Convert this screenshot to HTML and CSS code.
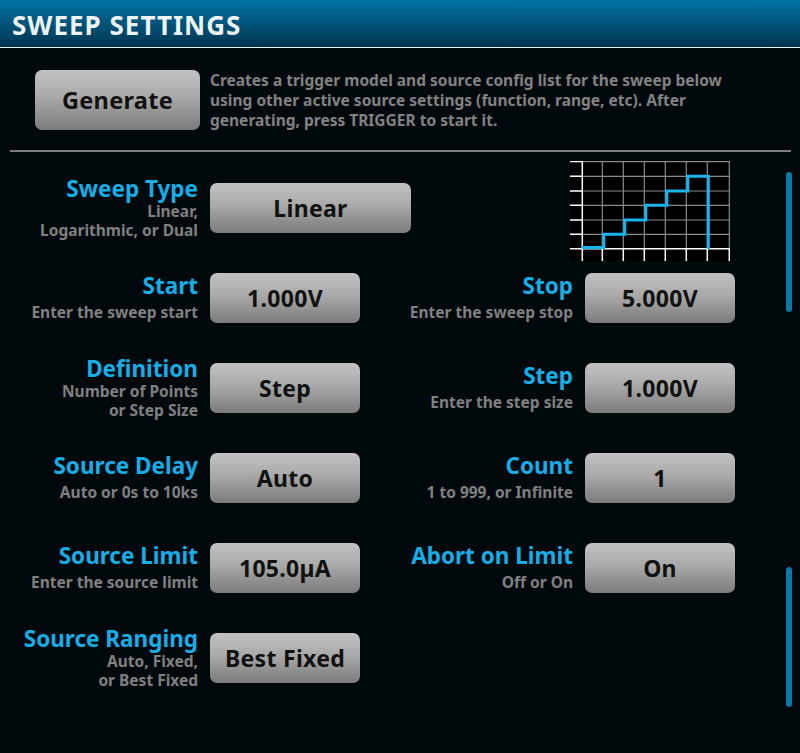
FILE: index.html
```html
<!DOCTYPE html>
<html lang="en">
<head>
    <meta charset="UTF-8">
    <meta name="viewport" content="width=device-width, initial-scale=1.0">
    <title>Sweep Settings</title>
    <link rel="stylesheet" href="styles.css">
</head>
<body>
    <div class="screen">
        <h1 class="title-bar">SWEEP SETTINGS</h1>

        <div class="intro">
            <button class="btn btn-generate">Generate</button>
            <p class="intro-text">Creates a trigger model and source config list for the sweep below<br>
                using other active source settings (function, range, etc). After<br>
                generating, press TRIGGER to start it.</p>
        </div>

        <div class="divider"></div>

        <div class="settings">
            <div class="row">
                <div class="field">
                    <div class="label">
                        <div class="name">Sweep Type</div>
                        <div class="hint tight">Linear,<br>Logarithmic, or Dual</div>
                    </div>
                    <button class="btn btn-wide">Linear</button>
                </div>
                <svg class="preview" width="160" height="100" viewBox="0 0 160 100">
                    <rect width="160" height="100" fill="#000"/>
                    <!-- grid -->
                    <g stroke="#8a8a8a" stroke-width="1.2">
                        <path d="M12 0.6H160M12 15.3H160M12 30H160M12 44.3H160M12 59H160M12 73.3H160"/>
                        <path d="M32.3 0V88M53.3 0V88M74.3 0V88M95.3 0V88M116.3 0V88M137.3 0V88M159.3 0V88"/>
                    </g>
                    <!-- axes and ticks -->
                    <g stroke="#fff" stroke-width="1.5">
                        <path d="M12.3 0V100M0 87.7H160"/>
                        <path d="M0 0.6H12M0 15.3H12M0 30H12M0 44.3H12M0 59H12M0 73.3H12"/>
                        <path d="M32.3 88V100M53.3 88V100M74.3 88V100M95.3 88V100M116.3 88V100M137.3 88V100M159.3 88V100"/>
                    </g>
                    <path d="M12 86.5H33.8V73.3H54.8V59H75.8V44.3H96.8V30H117.8V15.3H138.3V88" fill="none" stroke="#17b4ee" stroke-width="3"/>
                </svg>
            </div>

            <div class="row">
                <div class="field">
                    <div class="label">
                        <div class="name">Start</div>
                        <div class="hint">Enter the sweep start</div>
                    </div>
                    <button class="btn">1.000V</button>
                </div>
                <div class="field field-right">
                    <div class="label">
                        <div class="name">Stop</div>
                        <div class="hint">Enter the sweep stop</div>
                    </div>
                    <button class="btn">5.000V</button>
                </div>
            </div>

            <div class="row">
                <div class="field">
                    <div class="label">
                        <div class="name">Definition</div>
                        <div class="hint tight">Number of Points<br>or Step Size</div>
                    </div>
                    <button class="btn">Step</button>
                </div>
                <div class="field field-right">
                    <div class="label">
                        <div class="name">Step</div>
                        <div class="hint">Enter the step size</div>
                    </div>
                    <button class="btn">1.000V</button>
                </div>
            </div>

            <div class="row">
                <div class="field">
                    <div class="label">
                        <div class="name">Source Delay</div>
                        <div class="hint">Auto or 0s to 10ks</div>
                    </div>
                    <button class="btn">Auto</button>
                </div>
                <div class="field field-right">
                    <div class="label">
                        <div class="name">Count</div>
                        <div class="hint">1 to 999, or Infinite</div>
                    </div>
                    <button class="btn">1</button>
                </div>
            </div>

            <div class="row">
                <div class="field">
                    <div class="label">
                        <div class="name">Source Limit</div>
                        <div class="hint">Enter the source limit</div>
                    </div>
                    <button class="btn">105.0µA</button>
                </div>
                <div class="field field-right">
                    <div class="label">
                        <div class="name">Abort on Limit</div>
                        <div class="hint">Off or On</div>
                    </div>
                    <button class="btn">On</button>
                </div>
            </div>

            <div class="row">
                <div class="field">
                    <div class="label">
                        <div class="name">Source Ranging</div>
                        <div class="hint tight">Auto, Fixed,<br>or Best Fixed</div>
                    </div>
                    <button class="btn">Best Fixed</button>
                </div>
            </div>
        </div>

        <div class="thumb thumb-top"></div>
        <div class="thumb thumb-bottom"></div>
    </div>
</body>
</html>
```

FILE: styles.css
```css
* {
    margin: 0;
    padding: 0;
    box-sizing: border-box;
    font-family: 'Noto Sans', 'Open Sans', sans-serif;
}

body {
    background-color: #02090d;
    width: 800px;
    height: 753px;
    overflow: hidden;
}

.screen {
    position: relative;
    height: 753px;
}

.title-bar {
    height: 48px;
    padding: 4px 0 0 12px;
    line-height: 43px;
    font-size: 26px;
    font-weight: 700;
    letter-spacing: 1px;
    color: #eef3f6;
    background: linear-gradient(#0073a4, #01344f);
    border-bottom: 1px solid #eef3f6;
}

.intro {
    display: flex;
    gap: 10px;
    padding: 22px 0 20px 35px;
}

.intro-text {
    font-size: 15.5px;
    font-weight: 700;
    line-height: 20px;
    color: #828282;
    white-space: nowrap;
}

.divider {
    height: 2px;
    margin: 0 9px 0 10px;
    background-color: #7e7e7e;
}

.btn {
    width: 150px;
    height: 50px;
    border: none;
    border-radius: 7px;
    background: linear-gradient(#c2c2c2, #a9a9a9 45%, #7b7b7b);
    color: #111;
    font-size: 23px;
    font-weight: 700;
    letter-spacing: 0.3px;
    flex-shrink: 0;
}

.btn-generate {
    width: 165px;
    height: 60px;
    font-size: 23.5px;
}

.btn-wide {
    width: 201px;
}

.settings {
    display: flex;
    flex-direction: column;
    gap: 40px;
    padding: 31px 0 0 10px;
}

.row {
    display: flex;
    align-items: center;
    height: 50px;
}

.field {
    display: flex;
    align-items: center;
    gap: 12px;
}

.label {
    width: 188px;
    text-align: right;
}

.field-right .label {
    width: 213px;
}

.name {
    font-size: 22.5px;
    font-weight: 700;
    line-height: 24px;
    color: #17ade6;
    white-space: nowrap;
}

.hint {
    margin-top: 5px;
    font-size: 15.5px;
    font-weight: 700;
    line-height: 19px;
    color: #808080;
    white-space: nowrap;
}

.hint.tight {
    margin-top: 1px;
}

.preview {
    display: block;
    margin: 6px 0 0 159px;
    flex-shrink: 0;
}

.thumb {
    position: absolute;
    right: 8px;
    width: 6px;
    height: 140px;
    border-radius: 3px;
    background-color: #0a78a8;
}

.thumb-top {
    top: 172px;
}

.thumb-bottom {
    top: 567px;
}
```
